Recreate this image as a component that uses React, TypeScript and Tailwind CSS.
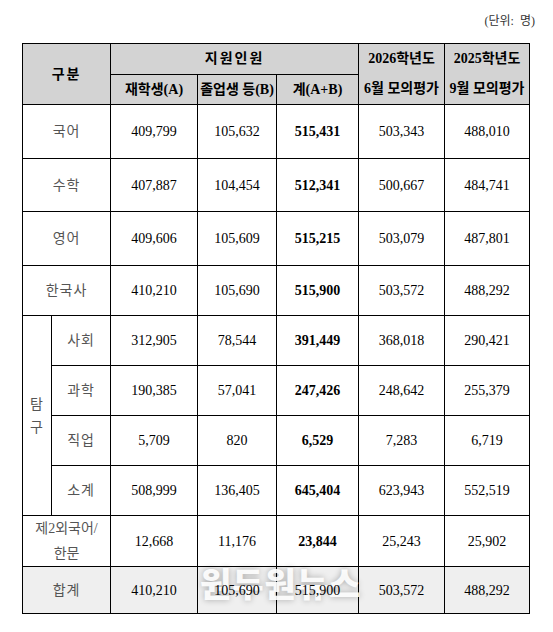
const FONT = { fontFamily: '"Liberation Serif", "Noto Sans CJK KR", serif' };

type Row = {
  label: string;
  h: string;
  a: string;
  b: string;
  sum: string;
  y26: string;
  y25: string;
};

const TOP_ROWS: Row[] = [
  { label: "국어", h: "h-[54px]", a: "409,799", b: "105,632", sum: "515,431", y26: "503,343", y25: "488,010" },
  { label: "수학", h: "h-[53px]", a: "407,887", b: "104,454", sum: "512,341", y26: "500,667", y25: "484,741" },
  { label: "영어", h: "h-[54px]", a: "409,606", b: "105,609", sum: "515,215", y26: "503,079", y25: "487,801" },
  { label: "한국사", h: "h-[50px]", a: "410,210", b: "105,690", sum: "515,900", y26: "503,572", y25: "488,292" },
];

const INQUIRY_ROWS: Row[] = [
  { label: "사회", h: "h-[50px]", a: "312,905", b: "78,544", sum: "391,449", y26: "368,018", y25: "290,421" },
  { label: "과학", h: "h-[50px]", a: "190,385", b: "57,041", sum: "247,426", y26: "248,642", y25: "255,379" },
  { label: "직업", h: "h-[50px]", a: "5,709", b: "820", sum: "6,529", y26: "7,283", y25: "6,719" },
  { label: "소계", h: "h-[50px]", a: "508,999", b: "136,405", sum: "645,404", y26: "623,943", y25: "552,519" },
];

const cell = "border border-black text-center align-middle p-0";
const label = "text-[14px] text-[#555] tracking-[1px]";
const num = "text-[14px] text-black";
const head = "text-[14px] font-bold text-black";

function NumCells({ r }: { r: Row }) {
  return (
    <>
      <td className={`${cell} ${num}`}>{r.a}</td>
      <td className={`${cell} ${num}`}>{r.b}</td>
      <td className={`${cell} ${num} font-bold`}>{r.sum}</td>
      <td className={`${cell} ${num}`}>{r.y26}</td>
      <td className={`${cell} ${num}`}>{r.y25}</td>
    </>
  );
}

export default function App() {
  return (
    <div className="w-[553px] h-[632px] bg-white overflow-hidden" style={FONT}>
      {/* unit note */}
      <div className="flex justify-end pr-[18px] pt-[13px] h-[43px]">
        <span className="text-[12px] leading-[16px] text-[#333] whitespace-pre">(단위:  명)</span>
      </div>

      <div className="relative pl-[22px]">
        <table className="table-fixed border-collapse w-[507px]">
          <colgroup>
            <col className="w-[29px]" />
            <col className="w-[59px]" />
            <col className="w-[87px]" />
            <col className="w-[79px]" />
            <col className="w-[82px]" />
            <col className="w-[86px]" />
            <col className="w-[85px]" />
          </colgroup>
          <thead>
            <tr className="h-[30px] bg-[#d3d3d3]">
              <th colSpan={2} rowSpan={2} className={`${cell} ${head} tracking-[2px]`}>
                구분
              </th>
              <th colSpan={3} className={`${cell} ${head} tracking-[2px]`}>
                지원인원
              </th>
              <th rowSpan={2} className={`${cell} ${head} leading-[30px] whitespace-nowrap`}>
                2026학년도
                <br />
                6월 모의평가
              </th>
              <th rowSpan={2} className={`${cell} ${head} leading-[30px] whitespace-nowrap`}>
                2025학년도
                <br />
                9월 모의평가
              </th>
            </tr>
            <tr className="h-[30px] bg-[#d3d3d3]">
              <th className={`${cell} ${head} whitespace-nowrap`}>재학생(A)</th>
              <th className={`${cell} ${head} whitespace-nowrap`}>졸업생 등(B)</th>
              <th className={`${cell} ${head} whitespace-nowrap`}>계(A+B)</th>
            </tr>
          </thead>
          <tbody>
            {TOP_ROWS.map((r) => (
              <tr key={r.label} className={r.h}>
                <td colSpan={2} className={`${cell} ${label}`}>
                  {r.label}
                </td>
                <NumCells r={r} />
              </tr>
            ))}
            {INQUIRY_ROWS.map((r, i) => (
              <tr key={r.label} className={r.h}>
                {i === 0 && (
                  <td rowSpan={4} className={`${cell} ${label} leading-[23px]`}>
                    탐
                    <br />구
                  </td>
                )}
                <td className={`${cell} ${label}`}>{r.label}</td>
                <NumCells r={r} />
              </tr>
            ))}
            <tr className="h-[50px]">
              <td colSpan={2} className={`${cell} text-[14px] text-[#555] leading-[25px] whitespace-nowrap`}>
                제2외국어/
                <br />
                한문
              </td>
              <NumCells
                r={{ label: "", h: "", a: "12,668", b: "11,176", sum: "23,844", y26: "25,243", y25: "25,902" }}
              />
            </tr>
            <tr className="h-[47px] bg-[#efefef]">
              <td colSpan={2} className={`${cell} ${label}`}>
                합계
              </td>
              <td className={`${cell} ${num}`}>410,210</td>
              <td className={`${cell} ${num}`}>
                <span className="relative z-10">105,690</span>
              </td>
              <td className={`${cell} ${num}`}>
                <span className="relative z-10">515,900</span>
              </td>
              <td className={`${cell} ${num}`}>503,572</td>
              <td className={`${cell} ${num}`}>488,292</td>
            </tr>
          </tbody>
        </table>

        {/* watermark */}
        <div
          className="absolute left-[200px] top-[523px] text-[34px] font-black leading-none text-white/90 tracking-[1px] pointer-events-none"
          style={{ fontFamily: '"Noto Sans CJK KR", sans-serif', textShadow: "0 0 6px rgba(0,0,0,0.3)" }}
        >
          원두원뉴스
        </div>
      </div>
    </div>
  );
}
